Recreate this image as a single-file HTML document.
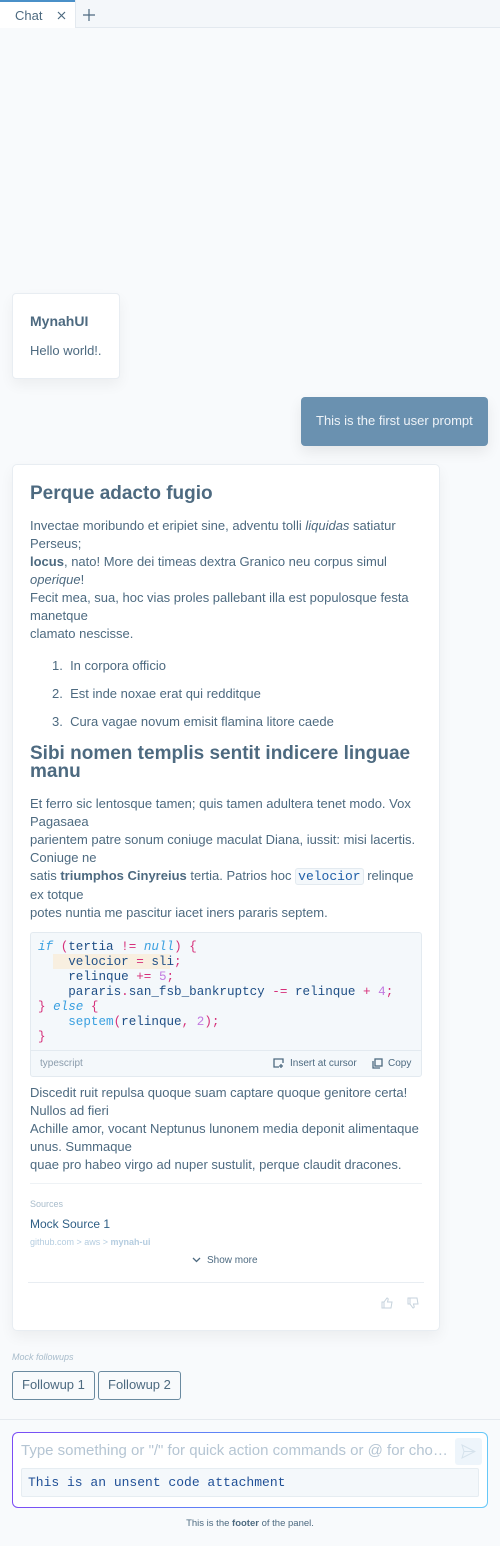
<!DOCTYPE html>
<html><head><meta charset="utf-8"><style>
*{margin:0;padding:0;box-sizing:border-box}
body{width:500px;height:1546px;background:#f8fafc;font-family:"Liberation Sans",sans-serif;color:#4d6a80;font-size:13px;position:relative;overflow:hidden}
.a{position:absolute}
.t{position:absolute;white-space:nowrap;line-height:18px}
.mono{font-family:"Liberation Mono",monospace}
</style></head><body>
<!-- tabs -->
<div class="a" style="left:0;top:0;width:500px;height:28px;background:#f4f7fa;border-bottom:1px solid #e3e9ef"></div>
<div class="a" style="left:0;top:0;width:75px;height:28px;background:#fff;border-top:2px solid #4a90c8"></div>
<div class="t" style="left:15px;top:7px;color:#4d6a80">Chat</div>
<svg class="a" style="left:57px;top:11px" width="9" height="9" viewBox="0 0 9 9"><path d="M1 1l7 7M8 1l-7 7" stroke="#4d6a80" stroke-width="1.2"/></svg>
<div class="a" style="left:75px;top:0;width:1px;height:28px;background:#e3e9ef"></div>
<svg class="a" style="left:83px;top:9px" width="12" height="12" viewBox="0 0 12 12"><path d="M6 0v12M0 6h12" stroke="#4d6a80" stroke-width="1.2"/></svg>

<!-- MynahUI card -->
<div class="a" style="left:12px;top:293px;width:108px;height:86px;background:#fff;border:1px solid #e8edf2;border-radius:4px;box-shadow:0 6px 14px rgba(0,0,0,0.05)"></div>
<div class="t" style="left:30px;top:312px;font-weight:bold;font-size:14px">MynahUI</div>
<div class="t" style="left:30px;top:342px">Hello world!.</div>

<!-- user prompt -->
<div class="a" style="left:301px;top:397px;width:187px;height:49px;background:#6a91b0;border-radius:4px;box-shadow:0 6px 14px rgba(0,0,0,0.08)"></div>
<div class="t" style="left:316px;top:412px;color:#eef3f8">This is the first user prompt</div>

<!-- main card -->
<div class="a" style="left:12px;top:464px;width:428px;height:867px;background:#fff;border:1px solid #e8edf2;border-radius:5px;box-shadow:0 6px 14px rgba(0,0,0,0.05)"></div>
<div class="t" style="left:30px;top:482px;font-size:19px;font-weight:bold;line-height:24px">Perque adacto fugio</div>
<div class="t" style="left:30px;top:517px">Invectae moribundo et eripiet sine, adventu tolli <i>liquidas</i> satiatur<br>Perseus;<br><b>locus</b>, nato! More dei timeas dextra Granico neu corpus simul<br><i>operique</i>!<br>Fecit mea, sua, hoc vias proles pallebant illa est populosque festa<br>manetque<br>clamato nescisse.</div>
<div class="t" style="left:52px;top:657px">1.&nbsp;&nbsp;In corpora officio</div>
<div class="t" style="left:52px;top:685px">2.&nbsp;&nbsp;Est inde noxae erat qui redditque</div>
<div class="t" style="left:52px;top:713px">3.&nbsp;&nbsp;Cura vagae novum emisit flamina litore caede</div>
<div class="t" style="left:30px;top:745px;font-size:19px;font-weight:bold;line-height:18px">Sibi nomen templis sentit indicere linguae<br>manu</div>
<div class="t" style="left:30px;top:795px">Et ferro sic lentosque tamen; quis tamen adultera tenet modo. Vox<br>Pagasaea<br>parientem patre sonum coniuge maculat Diana, iussit: misi lacertis.<br>Coniuge ne<br>satis <b>triumphos Cinyreius</b> tertia. Patrios hoc <span class="mono" style="color:#1f5fa8;background:#f4f8fb;border:1px solid #e3eaf0;border-radius:3px;padding:0 2px">velocior</span> relinque<br>ex totque<br>potes nuntia me pascitur iacet iners pararis septem.</div>

<!-- code block -->
<div class="a" style="left:30px;top:932px;width:392px;height:145px;background:#f4f8fb;border:1px solid #e3eaf0;border-radius:3px"></div>
<div class="a" style="left:53px;top:954px;width:117px;height:15px;background:#f8efe0"></div>
<div class="t mono" style="left:38px;top:940px;line-height:15px;font-size:12.6px;color:#1f4f86"><span style="color:#3aa0e0;font-style:italic">if</span> <span style="color:#d6307a">(</span>tertia <span style="color:#d6307a">!=</span> <span style="color:#3aa0e0;font-style:italic">null</span><span style="color:#d6307a">) {</span><br>&nbsp;&nbsp;&nbsp;&nbsp;velocior <span style="color:#d6307a">=</span> sli<span style="color:#d6307a">;</span><br>&nbsp;&nbsp;&nbsp;&nbsp;relinque <span style="color:#d6307a">+=</span> <span style="color:#c27ae0">5</span><span style="color:#d6307a">;</span><br>&nbsp;&nbsp;&nbsp;&nbsp;pararis<span style="color:#d6307a">.</span>san_fsb_bankruptcy <span style="color:#d6307a">-=</span> relinque <span style="color:#d6307a">+</span> <span style="color:#c27ae0">4</span><span style="color:#d6307a">;</span><br><span style="color:#d6307a">}</span> <span style="color:#3aa0e0;font-style:italic">else</span> <span style="color:#d6307a">{</span><br>&nbsp;&nbsp;&nbsp;&nbsp;<span style="color:#3aa0e0">septem</span><span style="color:#d6307a">(</span>relinque<span style="color:#d6307a">,</span> <span style="color:#c27ae0">2</span><span style="color:#d6307a">);</span><br><span style="color:#d6307a">}</span></div>
<div class="a" style="left:31px;top:1050px;width:390px;height:1px;background:#e3eaf0"></div>
<div class="t" style="left:40px;top:1055px;font-size:10px;color:#8a9cac">typescript</div>
<svg class="a" style="left:273px;top:1058px" width="12" height="11" viewBox="0 0 12 11"><path d="M6 9H1V1h9v4M8 6v4M6 8h4" fill="none" stroke="#4d6a80" stroke-width="1.3"/></svg>
<div class="t" style="left:290px;top:1055px;font-size:10px">Insert at cursor</div>
<svg class="a" style="left:372px;top:1058px" width="11" height="11" viewBox="0 0 11 11"><rect x="3" y="1" width="7" height="7" fill="none" stroke="#4d6a80" stroke-width="1.3"/><path d="M1 3v7h7" fill="none" stroke="#4d6a80" stroke-width="1.3"/></svg>
<div class="t" style="left:388px;top:1055px;font-size:10px">Copy</div>

<div class="t" style="left:30px;top:1084px">Discedit ruit repulsa quoque suam captare quoque genitore certa!<br>Nullos ad fieri<br>Achille amor, vocant Neptunus lunonem media deponit alimentaque<br>unus. Summaque<br>quae pro habeo virgo ad nuper sustulit, perque claudit dracones.</div>

<div class="a" style="left:30px;top:1183px;width:392px;height:1px;background:#eef2f5"></div>
<div class="t" style="left:30px;top:1195px;font-size:9px;color:#a8bccb">Sources</div>
<div class="t" style="left:30px;top:1215px;font-size:12px;color:#2f5f85">Mock Source 1</div>
<div class="t" style="left:30px;top:1233px;font-size:9px;color:#b5cde0">github.com &gt; aws &gt; <b>mynah-ui</b></div>
<svg class="a" style="left:192px;top:1257px" width="9" height="6" viewBox="0 0 9 6"><path d="M1 1l3.5 3.5L8 1" fill="none" stroke="#4d6a80" stroke-width="1.3"/></svg>
<div class="t" style="left:207px;top:1252px;font-size:10px">Show more</div>
<div class="a" style="left:28px;top:1282px;width:396px;height:1px;background:#e8edf2"></div>
<svg class="a" style="left:381px;top:1297px" width="12" height="12" viewBox="0 0 12 12"><path d="M1 5h2v6H1zM3 5l3-4c1 0 1.5 1 1 2l-.5 2H11l-1 6H3" fill="none" stroke="#c5d2dc" stroke-width="1"/></svg>
<svg class="a" style="left:407px;top:1297px" width="12" height="12" viewBox="0 0 12 12"><path d="M1 1h2v6H1zM3 7l3 4c1 0 1.5-1 1-2l-.5-2H11l-1-6H3" fill="none" stroke="#c5d2dc" stroke-width="1"/></svg>

<!-- followups -->
<div class="t" style="left:12px;top:1348px;font-size:9px;font-style:italic;color:#a8bccb">Mock followups</div>
<div class="a" style="left:12px;top:1371px;width:83px;height:29px;border:1px solid #6a8aa0;border-radius:3px"></div>
<div class="t" style="left:22px;top:1376px;font-size:13px">Followup 1</div>
<div class="a" style="left:98px;top:1371px;width:83px;height:29px;border:1px solid #6a8aa0;border-radius:3px"></div>
<div class="t" style="left:108px;top:1376px;font-size:13px">Followup 2</div>

<div class="a" style="left:0;top:1419px;width:500px;height:1px;background:#e5eaef"></div>
<!-- input -->
<div class="a" style="left:12px;top:1432px;width:476px;height:76px;border-radius:6px;background:linear-gradient(90deg,#7b4cf5,#5a8df7,#66c8f8);padding:1px"><div style="width:100%;height:100%;background:#fff;border-radius:5px"></div></div>
<div class="t" style="left:21px;top:1442px;font-size:15px;color:#b5c5d3">Type something or "/" for quick action commands or @ for cho…</div>
<div class="a" style="left:455px;top:1438px;width:27px;height:27px;background:#eef5fb;border-radius:3px"></div>
<svg class="a" style="left:461px;top:1444px" width="15" height="15" viewBox="0 0 15 15"><path d="M1 1l13 6.5L1 14l2-6.5zM3 7.5h11" fill="none" stroke="#d5e2ec" stroke-width="1"/></svg>
<div class="a" style="left:21px;top:1468px;width:458px;height:29px;background:#f4f8fb;border:1px solid #e6edf2;border-radius:2px"></div>
<div class="t mono" style="left:28px;top:1474px;font-size:13px;color:#1f4f96">This is an unsent code attachment</div>
<div class="t" style="left:0;width:500px;text-align:center;top:1515px;font-size:9.5px">This is the <b>footer</b> of the panel.</div>
</body></html>
